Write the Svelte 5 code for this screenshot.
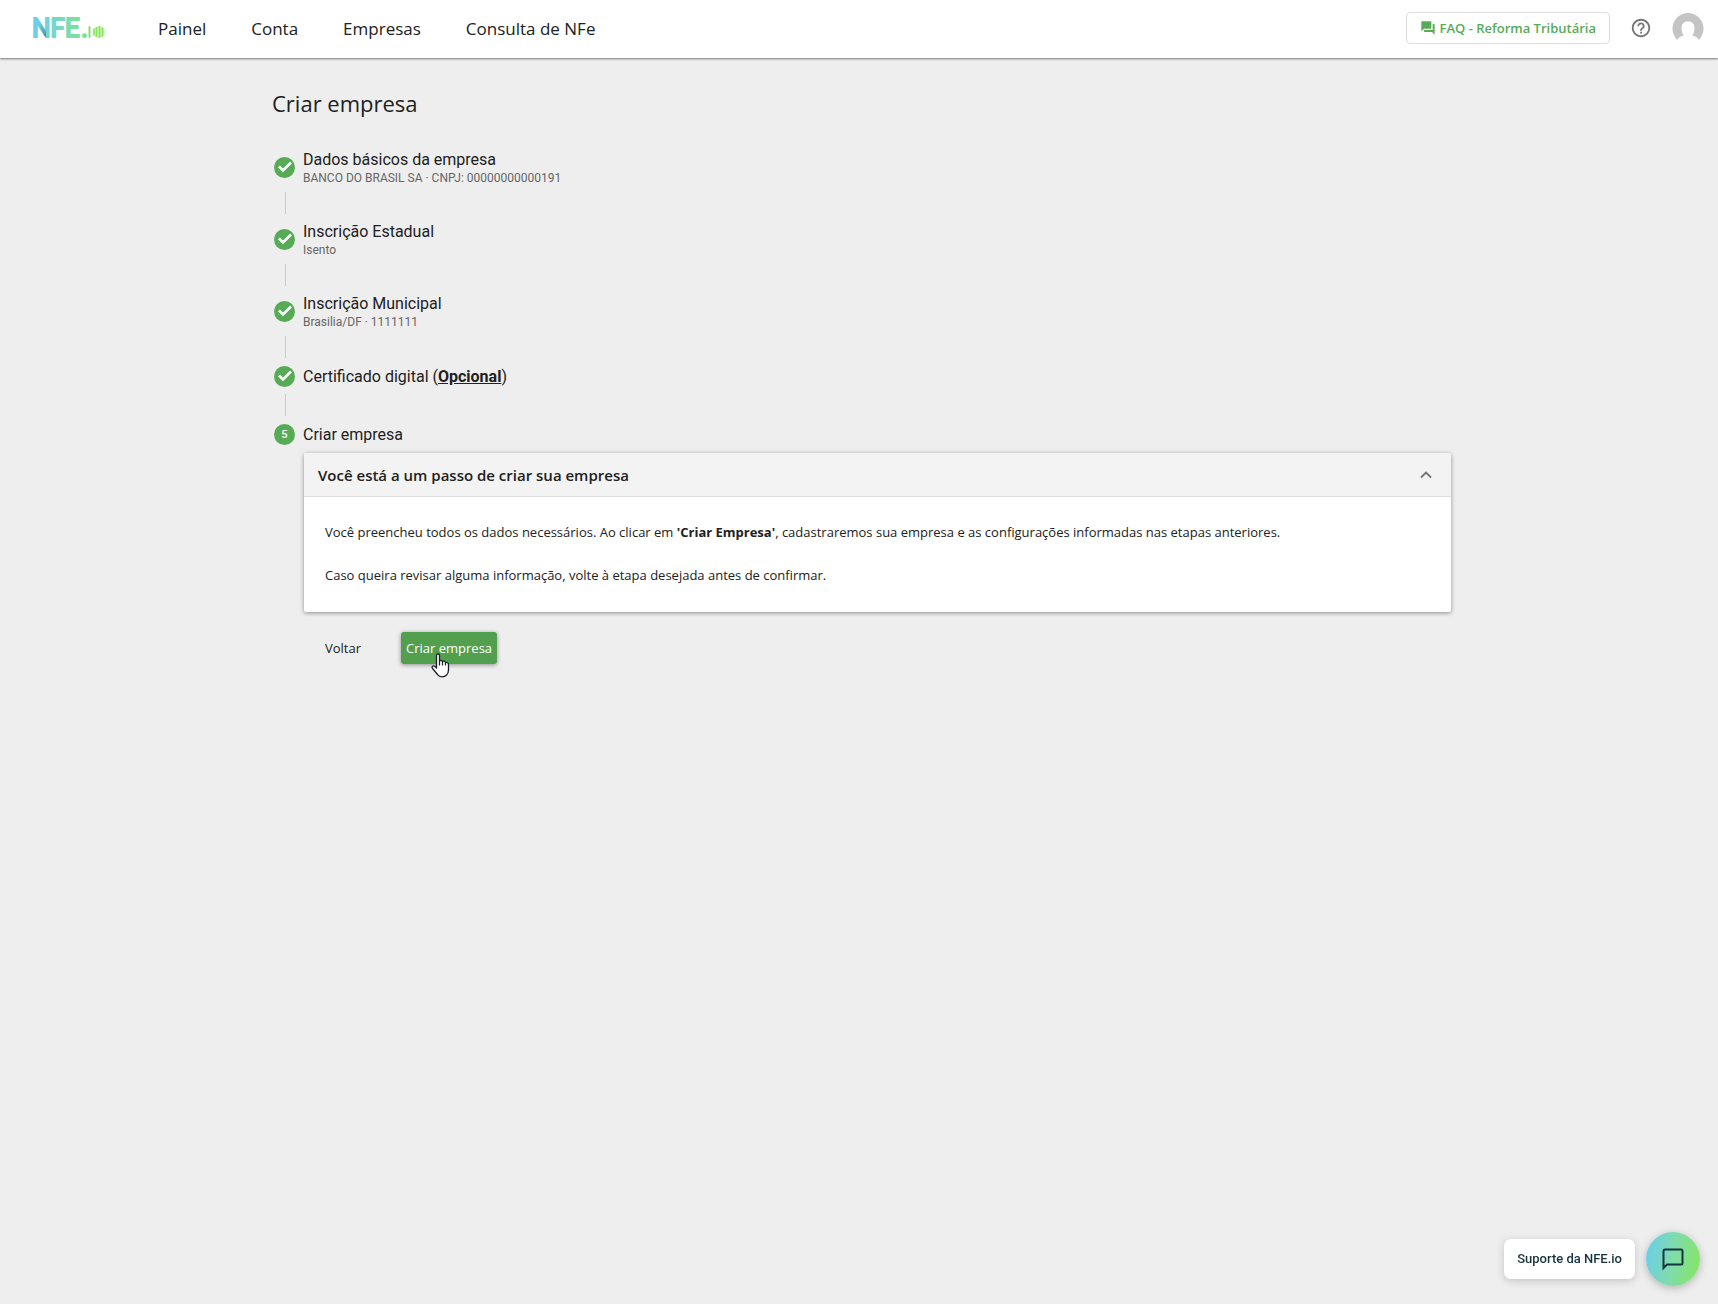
<script lang="ts">
  const links = ['Painel', 'Conta', 'Empresas', 'Consulta de NFe'];

  const steps = [
    { title: 'Dados básicos da empresa', detail: 'BANCO DO BRASIL SA · CNPJ: 00000000000191' },
    { title: 'Inscrição Estadual', detail: 'Isento' },
    { title: 'Inscrição Municipal', detail: 'Brasilia/DF · 1111111' },
    { title: 'Certificado digital', optional: true },
  ];

  let open = $state(true);
</script>

<header class="topbar">
  <a class="logo" href="/" aria-label="NFE.io">
    <svg width="74" height="36" viewBox="0 0 74 36">
      <defs>
        <linearGradient id="brand" gradientUnits="userSpaceOnUse" x1="0" y1="0" x2="74" y2="0">
          <stop offset="0" stop-color="#6acdf0" />
          <stop offset="0.45" stop-color="#7adbb8" />
          <stop offset="1" stop-color="#86e65c" />
        </linearGradient>
        <linearGradient id="fold" x1="0" y1="0" x2="1" y2="1">
          <stop offset="0" stop-color="#3f8288" stop-opacity="0" />
          <stop offset="1" stop-color="#3f8288" stop-opacity="0.8" />
        </linearGradient>
      </defs>
      <text y="27" class="wordmark"><tspan x="0">NFE</tspan><tspan x="49">.</tspan></text>
      <path d="M6.500 14L9 14L14 22V27L12.500 26Z" fill="url(#fold)" />
      <rect x="56.500" y="16" width="2" height="12" rx="1" fill="#86e070" />
      <circle cx="67" cy="22" r="6" fill="#c9f5b4" />
      <path d="M62 18.500v7M64.500 17v10M67.500 16v12M70.500 17.500v9" stroke="#86e65c" stroke-width="1.500" />
    </svg>
  </a>

  <nav>
    {#each links as link}
      <a href="/">{link}</a>
    {/each}
  </nav>

  <div class="actions">
    <a class="faq" href="/">
      <svg width="16" height="16" viewBox="0 0 24 24" fill="currentColor">
        <path d="M21 6h-2v9H6v2c0 .55.45 1 1 1h11l4 4V7c0-.55-.45-1-1-1zm-4 6V3c0-.55-.45-1-1-1H3c-.55 0-1 .45-1 1v14l4-4h10c.55 0 1-.45 1-1z" />
      </svg>
      FAQ - Reforma Tributária
    </a>
    <button class="icon" type="button" aria-label="Ajuda">
      <svg width="22" height="22" viewBox="0 0 24 24" fill="#757575">
        <path d="M11 18h2v-2h-2v2zm1-16C6.480 2 2 6.480 2 12s4.480 10 10 10 10-4.480 10-10S17.520 2 12 2zm0 18c-4.410 0-8-3.590-8-8s3.590-8 8-8 8 3.590 8 8-3.590 8-8 8zm0-14c-2.210 0-4 1.790-4 4h2c0-1.100.9-2 2-2s2 .9 2 2c0 2-3 1.750-3 5h2c0-2.250 3-2.500 3-5 0-2.210-1.790-4-4-4z" />
      </svg>
    </button>
    <button class="icon" type="button" aria-label="Perfil">
      <svg width="32" height="32" viewBox="0 0 32 32">
        <path d="M5.500 28A15.500 15.500 0 1 1 26.500 28Q25 24.500 20 23.600Q22.500 21 22.500 16.500C22.500 12 20.500 9.500 16 9.500S9.500 12 9.500 16.500Q9.500 21 12 23.600Q7 24.500 5.500 28Z" fill="#c4c4c4" />
      </svg>
    </button>
  </div>
</header>

<main>
  <h1>Criar empresa</h1>

  {#each steps as step}
    <div class="step" class:short={!step.detail}>
      <span class="badge">
        <svg width="16" height="16" viewBox="0 0 16 16">
          <path d="M2 7.500L6 11.500L14 3.500" fill="none" stroke="#fff" stroke-width="2.600" />
        </svg>
      </span>
      <div class="label">
        <div class="title">
          {step.title}{#if step.optional}{' '}(<b><u>Opcional</u></b>){/if}
        </div>
        {#if step.detail}
          <div class="detail">{step.detail}</div>
        {/if}
      </div>
    </div>
    <div class="connector"></div>
  {/each}

  <div class="step short">
    <span class="badge">5</span>
    <div class="label">
      <div class="title">Criar empresa</div>
    </div>
  </div>

  <div class="step-content">
    <section class="card">
      <button class="card-header" type="button" onclick={() => (open = !open)}>
        <span>Você está a um passo de criar sua empresa</span>
        <svg class:closed={!open} width="12" height="8" viewBox="0 0 12 8">
          <path d="M1 6.500L6 1.500L11 6.500" fill="none" stroke="#757575" stroke-width="1.800" />
        </svg>
      </button>
      {#if open}
        <div class="card-body">
          <p>
            Você preencheu todos os dados necessários. Ao clicar em <b>'Criar Empresa'</b>, cadastraremos sua empresa e as
            configurações informadas nas etapas anteriores.
          </p>
          <p>Caso queira revisar alguma informação, volte à etapa desejada antes de confirmar.</p>
        </div>
      {/if}
    </section>

    <div class="buttons">
      <button class="back" type="button">Voltar</button>
      <button class="create" type="button">
        Criar empresa
        <svg class="pointer" width="19" height="25" viewBox="0 0 19 25">
          <path d="M5.500 14V2.500Q5.500 1 7 1T8.500 2.500V8Q10 6.500 11.500 8.500Q13.500 7.500 14.500 9.500Q17.500 9 17.500 12V17Q17.500 20 15.500 22Q14 23.800 11 23.800T7 22L1.500 15.500Q0.500 13.500 2 13T5.500 15Z" fill="#fff" stroke="#1d1d2b" stroke-width="1.300" stroke-linejoin="round" />
          <path d="M8.500 8v4.500M11.500 8.500v4M14.500 9.500v3" stroke="#1d1d2b" stroke-width="1.200" />
        </svg>
      </button>
    </div>
  </div>
</main>

<aside class="support">
  <span class="support-label">Suporte da NFE.io</span>
  <button class="chat" type="button" aria-label="Abrir chat">
    <svg width="24" height="24" viewBox="0 0 24 24">
      <path d="M2.500 21V4Q2.500 2.500 4 2.500H20Q21.500 2.500 21.500 4V16Q21.500 17.500 20 17.500H6Z" fill="none" stroke="#17333f" stroke-width="2" />
    </svg>
  </button>
</aside>

<style>
  :global(body) {
    background: #eee;
    color: #212121;
    font-family: 'Open Sans', sans-serif;
    font-size: 13px;
  }

  button {
    border: none;
    background: none;
    padding: 0;
    font: inherit;
    color: inherit;
    cursor: pointer;
  }

  a {
    color: inherit;
    text-decoration: none;
  }

  svg {
    display: block;
  }

  .topbar {
    box-sizing: border-box;
    display: flex;
    align-items: center;
    height: 58px;
    padding: 0 14px 2px 32px;
    background: #fff;
    box-shadow: 0 1px 2px rgba(0, 0, 0, 0.5);
  }

  .wordmark {
    font-family: Roboto, sans-serif;
    font-size: 26px;
    fill: url(#brand);
    stroke: url(#brand);
    stroke-width: 2px;
    stroke-linejoin: round;
  }

  nav {
    display: flex;
    gap: 45px;
    margin-left: 52px;
    font-size: 17px;
  }

  .actions {
    display: flex;
    align-items: center;
    margin-left: auto;
  }

  .faq {
    display: flex;
    align-items: center;
    gap: 4px;
    height: 30px;
    padding: 0 13px;
    border: 1px solid #dcdcdc;
    border-radius: 4px;
    color: #58ab56;
    font-weight: 600;
  }

  .icon {
    margin-left: 20px;
  }

  main {
    box-sizing: border-box;
    max-width: 1200px;
    margin: 0 auto;
    padding: 29px 8px 40px 13px;
  }

  h1 {
    margin: 0 0 23px;
    font-size: 22px;
    font-weight: 400;
    line-height: 32px;
  }

  .step {
    display: flex;
    align-items: center;
    gap: 8px;
    height: 50px;
    padding-left: 2px;
    font-family: Roboto, sans-serif;
  }

  .step.short {
    height: 36px;
  }

  .badge {
    display: grid;
    place-items: center;
    width: 21px;
    height: 21px;
    border-radius: 50%;
    background: #58ab56;
    color: #fff;
    font-size: 11px;
    font-weight: 500;
  }

  .label {
    padding-top: 1px;
  }

  .title {
    font-size: 16px;
    line-height: 20px;
  }

  .detail {
    color: #666;
    font-size: 12px;
    line-height: 16px;
  }

  .connector {
    width: 1px;
    height: 22px;
    margin-left: 13px;
    background: #cacaca;
  }

  .step-content {
    padding: 1px 0 0 32px;
  }

  .card {
    border-radius: 2px;
    background: #fff;
    box-shadow: 0 1px 4px rgba(0, 0, 0, 0.4);
  }

  .card-header {
    display: flex;
    align-items: center;
    justify-content: space-between;
    width: 100%;
    height: 44px;
    padding: 0 19px 0 14px;
    border-bottom: 1px solid #dcdcdc;
    border-radius: 2px 2px 0 0;
    background: #f3f3f3;
    font-size: 15px;
    font-weight: 600;
  }

  .closed {
    transform: rotate(180deg);
  }

  .card-body {
    display: grid;
    gap: 23px;
    padding: 25px 21px 27px;
  }

  p {
    margin: 0;
    line-height: 20px;
  }

  .buttons {
    display: flex;
    align-items: center;
    gap: 40px;
    padding: 20px 21px;
  }

  .create {
    position: relative;
    height: 32px;
    padding: 0 5px;
    border-radius: 3px;
    background: #52a04e;
    box-shadow: 0 1px 4px rgba(0, 0, 0, 0.4);
    color: #fff;
  }

  .pointer {
    position: absolute;
    top: 21px;
    left: 30px;
  }

  .support {
    position: fixed;
    right: 18px;
    bottom: 18px;
    display: flex;
    align-items: center;
    gap: 11px;
    font-family: Roboto, sans-serif;
  }

  .support-label {
    padding: 0 13px;
    border-radius: 7px;
    background: #fff;
    box-shadow: 0 2px 8px rgba(0, 0, 0, 0.18);
    color: #17333f;
    font-weight: 500;
    line-height: 40px;
  }

  .chat {
    display: grid;
    place-items: center;
    width: 54px;
    height: 54px;
    border-radius: 50%;
    background: linear-gradient(100deg, #6acdf0, #7fdcaa 50%, #86e65c);
    box-shadow: 0 2px 8px rgba(0, 0, 0, 0.25);
  }
</style>
